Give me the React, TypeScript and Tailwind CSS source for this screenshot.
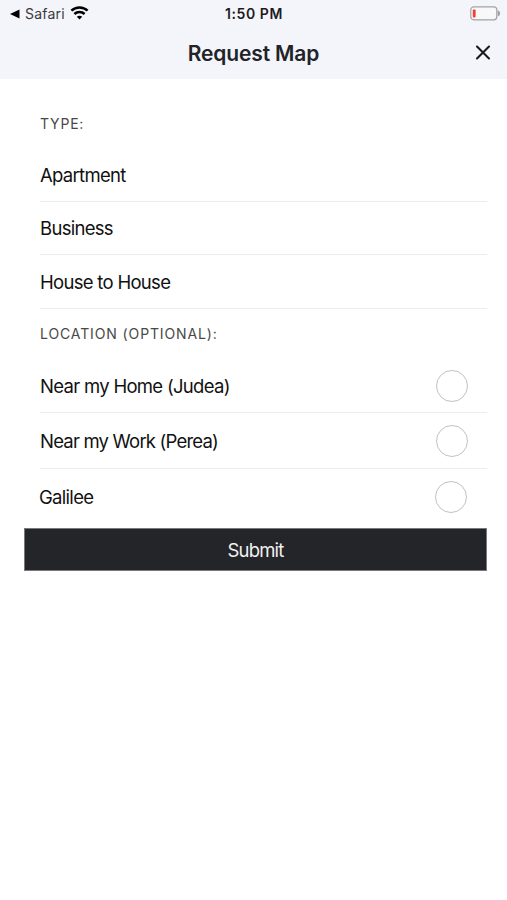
interface TypeRowProps {
  label: string;
  className: string;
}

interface LocationRowProps {
  label: string;
  className: string;
}

function StatusBar() {
  return (
    <div className="grid grid-cols-3 items-center h-7 pl-2.5 pr-1.5 text-[#1c1c1e]">
      <div className="flex items-center">
        <svg width="10" height="10" viewBox="0 0 10 10" fill="#000">
          <path d="M0 5 9.5 .6V9.4Z" />
        </svg>
        <span className="ml-[5px] text-[14px] leading-7 tracking-[0.2px] text-[#3a3a3c]">Safari</span>
        <svg className="ml-[5px] -mt-[3px]" width="19" height="15" viewBox="0 0 19 15" fill="none" stroke="#000" strokeWidth="2.5">
          <path d="M1.4 5.6C5.9 1.3 13.1 1.3 17.6 5.6" />
          <path d="M4.4 9C7.2 6.3 11.8 6.3 14.6 9" />
          <path d="M9.5 14.4 6.8 11.7C8.2 10.3 10.8 10.3 12.2 11.7Z" fill="#000" stroke="none" />
        </svg>
      </div>
      <div className="-ml-[3px] text-center text-[14px] leading-7 font-semibold tracking-[0.55px]">1:50 PM</div>
      <div className="flex justify-end">
        <svg className="-mt-px" width="31" height="15" viewBox="0 0 31 15" fill="none">
          <rect x=".8" y=".8" width="26" height="13" rx="3" fill="#f8f8fa" stroke="#a3a3a5" strokeWidth="1.2" />
          <rect x="2.8" y="3.4" width="2.8" height="8" rx=".8" fill="#f43d30" />
          <path d="M27.6 4.2C31 5.2 31 9.4 27.6 10.4Z" fill="#a3a3a5" />
        </svg>
      </div>
    </div>
  );
}

function TypeRow({ label, className }: TypeRowProps) {
  return (
    <button className={`flex items-center w-full text-left border-b border-[#ececec] ${className}`}>
      {label}
    </button>
  );
}

function LocationRow({ label, className }: LocationRowProps) {
  return (
    <label className={`flex items-center justify-between ${className}`}>
      <span>{label}</span>
      <span className="w-8 h-8 rounded-full border border-[#c2c2c2]" />
    </label>
  );
}

export default function App() {
  return (
    <div className="min-h-screen bg-white font-['Inter',sans-serif] text-[18.5px] leading-6 tracking-[-0.7px] text-[#111]">
      <header className="h-[79px] bg-[#f4f5fa]">
        <StatusBar />
        <div className="grid grid-cols-[1fr_auto_1fr] items-center h-[50px]">
          <h1 className="col-start-2 pt-px text-[21px] font-semibold tracking-[-0.14px] text-[#212328]">Request Map</h1>
          <button className="justify-self-end mr-4" aria-label="Close">
            <svg width="16" height="16" viewBox="0 0 16 16" stroke="#17181b" strokeWidth="2.1" strokeLinecap="round">
              <path d="M2 1.5 14 13.5M14 1.5 2 13.5" />
            </svg>
          </button>
        </div>
      </header>

      <main className="pl-10 pr-5">
        <h2 className="pt-[33px] text-[14px] tracking-[0.8px] text-[#484848]">TYPE:</h2>
        <div className="mt-3">
          <TypeRow label="Apartment" className="h-[54px]" />
          <TypeRow label="Business" className="h-[53px]" />
          <TypeRow label="House to House" className="h-[54px]" />
        </div>

        <h2 className="pt-[13px] text-[14px] tracking-[0.88px] text-[#484848]">LOCATION (OPTIONAL):</h2>
        <LocationRow label="Near my Home (Judea)" className="mt-[13px] h-[54px] pr-[19px] border-b border-[#ececec]" />
        <LocationRow label="Near my Work (Perea)" className="h-14 pr-[19px] border-b border-[#ececec] tracking-[-0.8px]" />
        <LocationRow label="Galilee" className="-ml-px h-14 pr-5" />
      </main>

      <button className="block w-[463px] h-[43px] ml-6 mt-[3px] bg-[#232528] border border-[#77797b] text-[#f1f1f1] tracking-[-0.8px]">Submit</button>
    </div>
  );
}
